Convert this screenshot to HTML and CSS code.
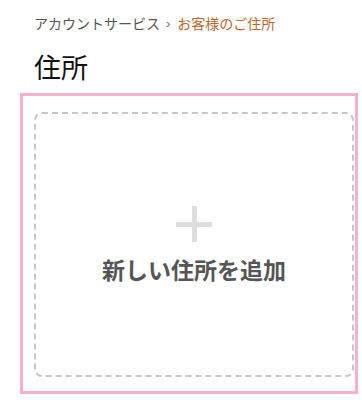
FILE: index.html
```html
<!DOCTYPE html>
<html lang="ja">
<head>
    <meta charset="UTF-8">
    <meta name="viewport" content="width=device-width, initial-scale=1.0">
    <title>住所</title>
    <link rel="stylesheet" href="styles.css">
</head>
<body>
    <div class="page">
        <div class="breadcrumb">
            <a href="#" class="crumb">アカウントサービス</a>
            <span class="sep">›</span>
            <span class="crumb current">お客様のご住所</span>
        </div>

        <h1>住所</h1>

        <div class="address-box">
            <a href="#" class="add-address">
                <svg class="plus" width="36" height="36" viewBox="0 0 36 36">
                    <rect x="16" y="0" width="5" height="36" fill="#dddddd"></rect>
                    <rect x="0" y="16" width="36" height="5" fill="#dddddd"></rect>
                </svg>
                <span class="add-label">新しい住所を追加</span>
            </a>
        </div>
    </div>
</body>
</html>
```

FILE: styles.css
```css
body {
    margin: 0;
    font-family: Arial, "Liberation Sans", "Noto Sans CJK JP", sans-serif;
    color: #111;
    background-color: #fff;
}

.page {
    padding: 14px 0 0 20px;
}

.breadcrumb {
    padding-left: 14px;
    font-size: 14px;
    line-height: 20px;
    display: flex;
    align-items: center;
}

.crumb {
    color: #555;
    text-decoration: none;
}

.crumb.current {
    color: #b8672e;
}

.sep {
    color: #666;
    margin: 0 7px 0 6px;
    font-size: 13px;
}

h1 {
    margin: 17px 0 6px;
    padding-left: 14px;
    font-size: 27px;
    font-weight: normal;
    line-height: 36px;
}

/* pink outline around the add card */
.address-box {
    border: 3px solid #f4b0cc;
    padding: 16px 1px 14px 11px;
    width: 320px;
    height: 265px;
}

.add-address {
    display: flex;
    flex-direction: column;
    align-items: center;
    justify-content: center;
    height: 100%;
    box-sizing: border-box;
    border: 2px dashed #c7c7c7;
    border-radius: 8px;
    text-decoration: none;
    padding-top: 2px;
}

.plus {
    display: block;
    margin-bottom: 14px;
}

.add-label {
    font-size: 23px;
    font-weight: bold;
    color: #555;
    line-height: 30px;
}
```
